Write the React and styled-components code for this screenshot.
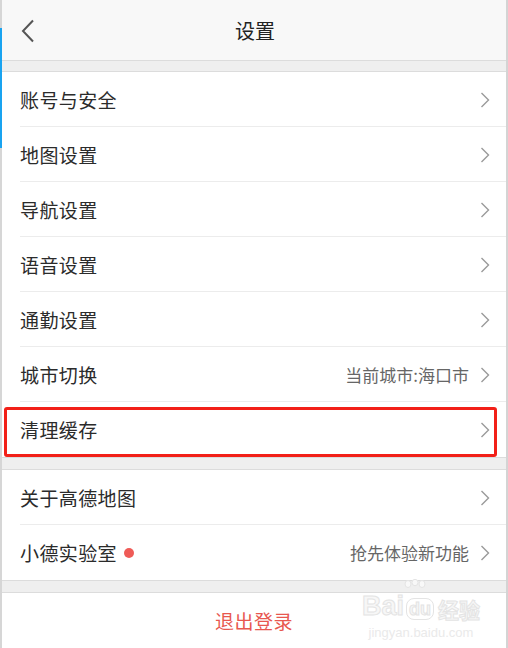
import React from "react";
import styled, { createGlobalStyle } from "styled-components";

const Global = createGlobalStyle`
  html, body { margin: 0; padding: 0; background: #fff; }
  body { font-family: "Noto Sans CJK SC", "Noto Sans", sans-serif; }
  * { box-sizing: border-box; }
`;

const Page = styled.div`
  width: 508px;
  height: 648px;
  display: flex;
  overflow: hidden;
  position: relative;
`;

const LeftEdge = styled.div`
  width: 2px;
  flex: none;
  background: linear-gradient(
    to bottom,
    #d6d6d6 0px, #d6d6d6 28px,
    #19a3f0 28px, #19a3f0 148px,
    #d6d6d6 148px, #d6d6d6 100%
  );
`;

const RightEdge = styled.div`
  width: 2px;
  flex: none;
  background: #d4d4d4;
`;

const Main = styled.div`
  flex: 1;
  display: flex;
  flex-direction: column;
  background: #fff;
`;

const Header = styled.header`
  height: 61px;
  background: #f8f8f8;
  border-bottom: 1px solid #dcdcdc;
  display: flex;
  align-items: center;
  justify-content: center;
  position: relative;
  flex: none;
`;

const Back = styled.button`
  position: absolute;
  left: 14px;
  top: 18px;
  width: 24px;
  height: 26px;
  border: 0;
  background: none;
  padding: 0;
  display: flex;
  align-items: center;
  justify-content: center;
`;

const Title = styled.h1`
  margin: 0;
  font-size: 20px;
  font-weight: 400;
  color: #222;
  padding-left: 2px;
`;

const Band = styled.div`
  height: ${(p) => p.$h}px;
  background: #efefef;
  border-bottom: 1px solid #dcdcdc;
  border-top: ${(p) => (p.$top ? "1px solid #dcdcdc" : "0")};
  flex: none;
`;

const Group = styled.div`
  display: flex;
  flex-direction: column;
`;

const Row = styled.div`
  height: 55px;
  display: flex;
  align-items: center;
  padding: 0 16px 0 18px;
  position: relative;
  flex: none;
  &:not(:last-child)::after {
    content: "";
    position: absolute;
    left: 18px;
    right: 0;
    bottom: 0;
    height: 1px;
    background: #ececec;
  }
`;

const Label = styled.span`
  font-size: 19px;
  color: #2b2b2b;
  letter-spacing: 0.4px;
  display: flex;
  align-items: center;
`;

const Dot = styled.span`
  width: 10px;
  height: 10px;
  border-radius: 50%;
  background: #ef5b57;
  margin-left: 7px;
  margin-top: 1px;
`;

const Spacer = styled.div`
  flex: 1;
`;

const Value = styled.span`
  font-size: 17px;
  color: #666;
  margin-right: 11px;
`;

const Highlight = styled.div`
  position: absolute;
  left: 2px;
  right: 9px;
  top: 5px;
  bottom: 0px;
  border: 3px solid #f22018;
  border-radius: 3px;
  pointer-events: none;
`;

const Logout = styled.div`
  height: 55px;
  display: flex;
  align-items: center;
  justify-content: center;
  font-size: 19px;
  color: #e8574f;
  letter-spacing: 0.5px;
  flex: none;
`;

const Watermark = styled.div`
  position: absolute;
  right: 28px;
  bottom: 8px;
  display: flex;
  flex-direction: column;
  align-items: center;
  font-family: "Liberation Sans", Arial, sans-serif;
  pointer-events: none;
`;

const WmTop = styled.div`
  display: flex;
  align-items: flex-end;
  position: relative;
  font-size: 27px;
  font-weight: 700;
  line-height: 1;
  color: #f7f7f7;
  -webkit-text-stroke: 1px #e4e4e4;
`;

const WmDu = styled.span`
  font-size: 18px;
  margin: 0 2px;
  padding: 1px 2px;
  border: 1px solid #e4e4e4;
  border-radius: 8px;
`;

const WmCn = styled.span`
  font-family: "Noto Sans CJK SC", sans-serif;
  font-size: 21px;
  margin-left: 2px;
`;

const WmPaw = styled.svg`
  position: absolute;
  left: 40px;
  top: -14px;
`;

const WmBottom = styled.div`
  font-size: 13px;
  color: #eaeaea;
  margin-top: 5px;
`;

const Chevron = () => (
  <svg width="10" height="16" viewBox="0 0 10 16">
    <path d="M1.5 1 L8.5 8 L1.5 15" fill="none" stroke="#9a9a9a" strokeWidth="1.4" />
  </svg>
);

const BackIcon = () => (
  <svg width="14" height="24" viewBox="0 0 14 24">
    <path d="M12 1.5 L2 12 L12 22.5" fill="none" stroke="#555" strokeWidth="2" />
  </svg>
);

const group1 = [
  { label: "账号与安全" },
  { label: "地图设置" },
  { label: "导航设置" },
  { label: "语音设置" },
  { label: "通勤设置" },
  { label: "城市切换", value: "当前城市:海口市" },
  { label: "清理缓存", highlight: true },
];

const group2 = [
  { label: "关于高德地图" },
  { label: "小德实验室", dot: true, value: "抢先体验新功能" },
];

const Item = ({ label, value, dot, highlight }) => (
  <Row>
    <Label>
      {label}
      {dot && <Dot />}
    </Label>
    <Spacer />
    {value && <Value>{value}</Value>}
    <Chevron />
    {highlight && <Highlight />}
  </Row>
);

export default function App() {
  return (
    <>
      <Global />
      <Page>
        <LeftEdge />
        <Main>
          <Header>
            <Back aria-label="返回">
              <BackIcon />
            </Back>
            <Title>设置</Title>
          </Header>
          <Band $h={11} />
          <Group>
            {group1.map((it) => (
              <Item key={it.label} {...it} />
            ))}
          </Group>
          <Band $h={13} $top />
          <Group>
            {group2.map((it) => (
              <Item key={it.label} {...it} />
            ))}
          </Group>
          <Band $h={13} $top />
          <Logout>退出登录</Logout>
        </Main>
        <RightEdge />
        <Watermark>
          <WmPaw width="26" height="20" viewBox="0 0 26 20">
            <g fill="#f8f8f8" stroke="#e4e4e4" strokeWidth="1">
              <ellipse cx="6" cy="5" rx="3" ry="3.5" />
              <ellipse cx="13" cy="3.5" rx="3" ry="3.2" />
              <ellipse cx="20" cy="5" rx="3" ry="3.5" />
            </g>
          </WmPaw>
          <WmTop>
            Bai<WmDu>du</WmDu>
            <WmCn>经验</WmCn>
          </WmTop>
          <WmBottom>jingyan.baidu.com</WmBottom>
        </Watermark>
      </Page>
    </>
  );
}
